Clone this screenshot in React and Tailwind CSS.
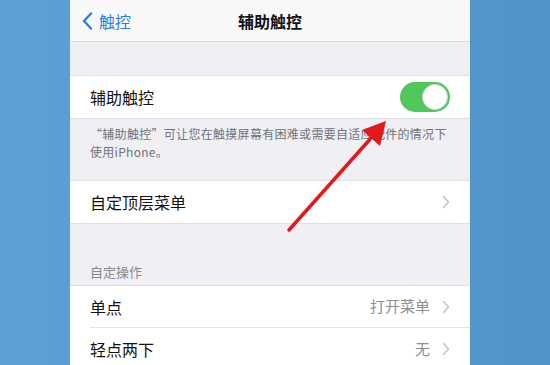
import React from 'react';

const FONT = { fontFamily: '"Noto Sans CJK SC", "Noto Sans", sans-serif' };

function Chevron({ className = '' }) {
  return (
    <svg width="8" height="14" viewBox="0 0 8 14" className={className}>
      <path d="M1.5 1.5 L6.5 7 L1.5 12.5" fill="none" stroke="#c4c4c8" strokeWidth="1.6" strokeLinecap="round" strokeLinejoin="round" />
    </svg>
  );
}

function Row({ label, value, children, border }) {
  return (
    <div className="h-[42px] shrink-0 bg-white pl-5 flex">
      <div className={'flex-1 flex items-center pr-5 ' + (border ? 'border-b border-[#e3e3e6]' : '')}>
        <span className="flex-1 text-[16px] text-[#111]">{label}</span>
        {value && <span className="text-[15px] text-[#8e8e93] mr-3">{value}</span>}
        {children}
      </div>
    </div>
  );
}

export default function App() {
  return (
    <div className="relative w-[550px] h-[365px] overflow-hidden flex bg-gradient-to-r from-[#5ba1d5] to-[#4f95c9]" style={FONT}>
      <div className="w-[70px]" />
      <div className="w-[400px] bg-[#efeff4] flex flex-col">
        {/* nav bar */}
        <div className="h-[42px] shrink-0 bg-[#f8f8f9] border-b border-[#d9d9dc] relative flex items-center justify-center">
          <div className="absolute left-3 top-0 h-full flex items-center gap-1.5 text-[#2f7ce3]">
            <svg width="11" height="18" viewBox="0 0 11 18">
              <path d="M9 1.5 L2 9 L9 16.5" fill="none" stroke="#2f7ce3" strokeWidth="2.4" strokeLinecap="round" strokeLinejoin="round" />
            </svg>
            <span className="text-[16px]">触控</span>
          </div>
          <span className="text-[16px] font-semibold text-[#111]">辅助触控</span>
        </div>

        <div className="h-[34px] shrink-0 border-b border-[#e0e0e3]" />

        <Row label="辅助触控">
          <div className="w-[50px] h-[30px] rounded-full bg-[#4fc75a] flex items-center justify-end pr-[2px]">
            <div className="w-[26px] h-[26px] rounded-full bg-white border border-[#d8d8d8]" />
          </div>
        </Row>

        <div className="h-[63px] shrink-0 border-t border-[#e0e0e3] border-b px-5 pt-[6px] text-[12px] leading-[18px] tracking-[0.3px] text-[#727277]">
          “辅助触控”可让您在触摸屏幕有困难或需要自适应配件的情况下<br />使用iPhone。
        </div>

        <Row label="自定顶层菜单">
          <Chevron />
        </Row>

        <div className="h-[63px] shrink-0 border-t border-b border-[#e0e0e3] px-5 flex items-end pb-[4px]">
          <span className="text-[13px] text-[#8a8a8f]">自定操作</span>
        </div>

        <Row label="单点" value="打开菜单" border>
          <Chevron />
        </Row>
        <Row label="轻点两下" value="无">
          <Chevron />
        </Row>
      </div>
      <div className="flex-1" />

      {/* red arrow overlay */}
      <svg className="absolute left-0 top-0 pointer-events-none" width="550" height="365" viewBox="0 0 550 365">
        <line x1="289" y1="230" x2="372" y2="137" stroke="#e01a1a" strokeWidth="3.5" strokeLinecap="round" />
        <polygon points="386,121 380,146 362,130" fill="#e01a1a" />
      </svg>
    </div>
  );
}
